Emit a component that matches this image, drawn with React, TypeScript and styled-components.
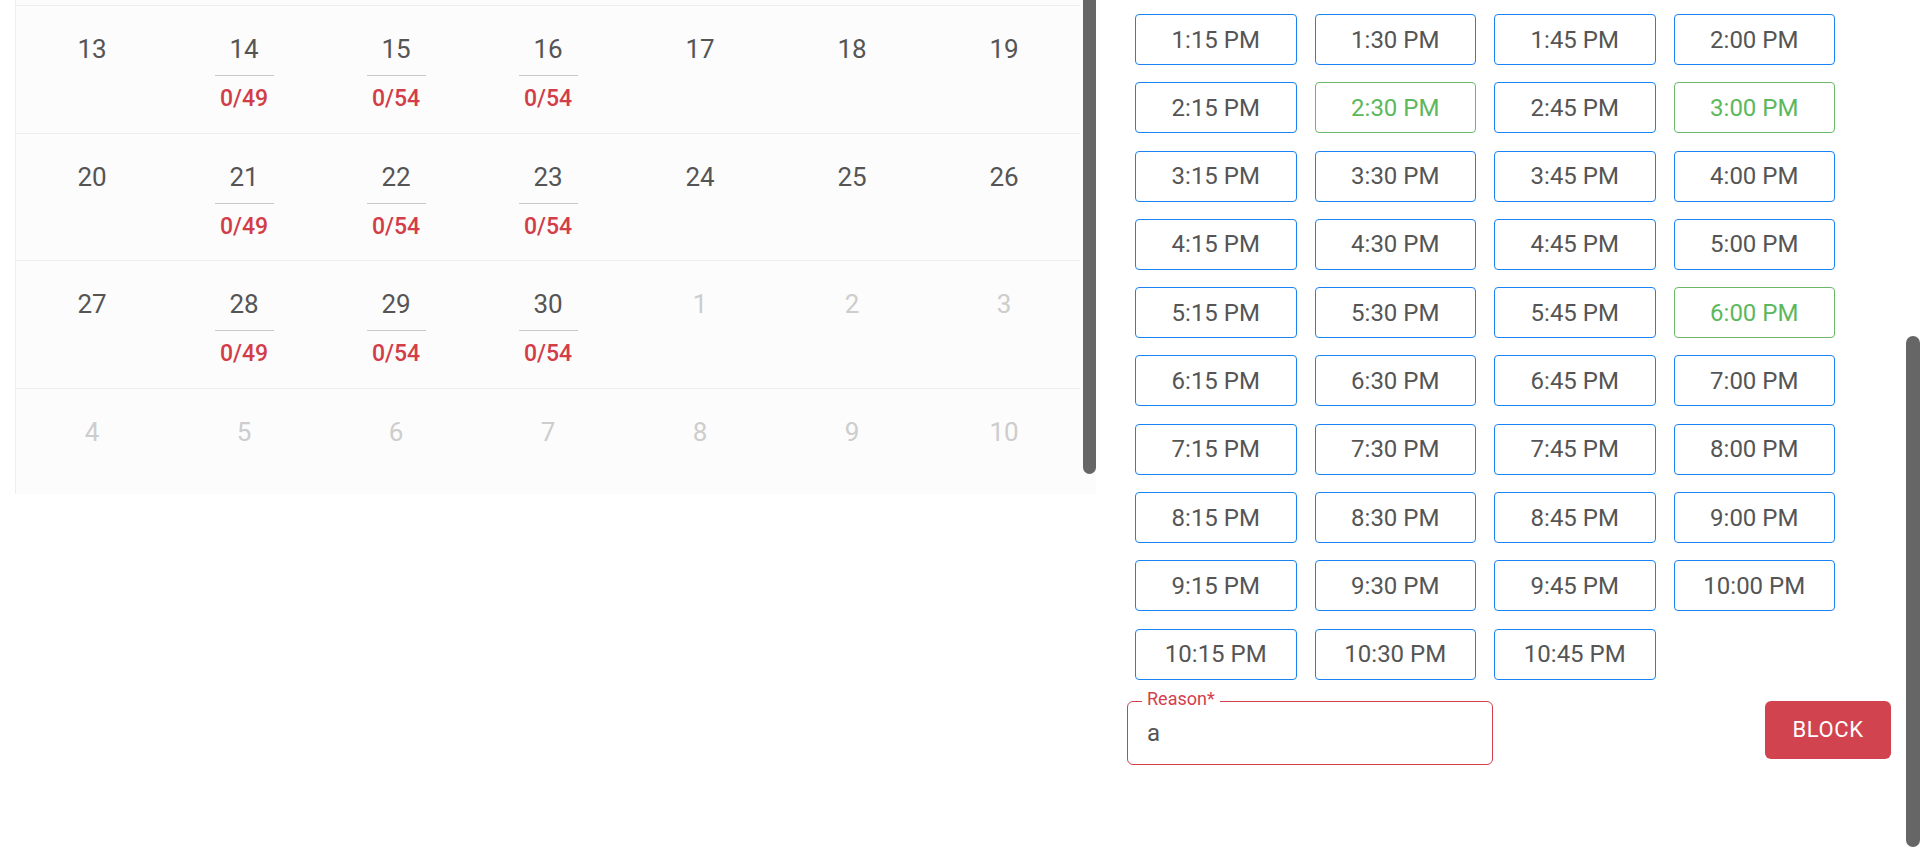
import React from 'react';
import styled, { createGlobalStyle } from 'styled-components';

const GlobalStyle = createGlobalStyle`
  html, body {
    margin: 0;
    padding: 0;
    background: #fff;
    overflow: hidden;
  }
  body {
    font-family: Roboto, "Liberation Sans", sans-serif;
  }
`;

type Day = { n: number; count?: string; muted?: boolean };

const week = (start: number, opts: { counts?: boolean; mutedFrom?: number; allMuted?: boolean } = {}): Day[] =>
  Array.from({ length: 7 }, (_, i) => {
    const raw = start + i;
    const rolled = opts.mutedFrom !== undefined && raw > opts.mutedFrom;
    const n = rolled ? raw - opts.mutedFrom! : raw;
    const muted = opts.allMuted || rolled;
    let count: string | undefined;
    if (opts.counts && !muted && i >= 1 && i <= 3) count = i === 1 ? '0/49' : '0/54';
    return { n, count, muted };
  });

// the week of the 6th is scrolled up out of view, only its bottom edge shows
const weeks: Day[][] = [
  week(13, { counts: true }),
  week(20, { counts: true }),
  week(27, { counts: true, mutedFrom: 30 }),
  week(4, { allMuted: true }),
];

const makeSlots = () => {
  const out: string[] = [];
  for (let m = 13 * 60 + 15; m <= 22 * 60 + 45; m += 15) {
    const h = Math.floor(m / 60) - 12;
    const mm = String(m % 60).padStart(2, '0');
    out.push(`${h}:${mm} PM`);
  }
  return out;
};

const slots = makeSlots();
const taken = new Set(['2:30 PM', '3:00 PM', '6:00 PM']);

const App: React.FC = () => {
  return (
    <>
      <GlobalStyle />
      <Page>
        <Calendar>
          <Weeks>
            {weeks.map((w, wi) => (
              <Week key={wi}>
                {w.map((d, di) => (
                  <Cell key={di}>
                    <DayNum muted={d.muted}>{d.n}</DayNum>
                    {d.count && <Count>{d.count}</Count>}
                  </Cell>
                ))}
              </Week>
            ))}
          </Weeks>
          <PanelThumb />
        </Calendar>

        <Side>
          <Slots>
            {slots.map((s) => (
              <SlotButton key={s} taken={taken.has(s)}>
                {s}
              </SlotButton>
            ))}
          </Slots>
          <FormRow>
            <Field>
              <FieldLabel>Reason*</FieldLabel>
              <FieldInput defaultValue="a" autoFocus />
            </Field>
            <BlockButton>Block</BlockButton>
          </FormRow>
        </Side>
      </Page>
      <PageThumb />
    </>
  );
};

export default App;

const Page = styled.div`
  display: flex;
  align-items: flex-start;
  width: 1920px;
  height: 849px;
`;

const Calendar = styled.div`
  position: relative;
  margin-left: 15px;
  width: 1081px;
  height: 494px;
  overflow: hidden;
  box-sizing: border-box;
  border-left: 1px solid #eeeeee;
  background: #fcfcfc;
  flex-shrink: 0;
`;

const Weeks = styled.div`
  padding-top: 5px;
  width: 1064px;
`;

const Week = styled.div`
  display: grid;
  grid-template-columns: repeat(7, 152px);
  height: 127.6px;
  box-sizing: border-box;
  border-top: 1px solid #eeeeee;
`;

const Cell = styled.div`
  display: flex;
  flex-direction: column;
  align-items: center;
  padding-top: 28px;
`;

const DayNum = styled.div<{ muted?: boolean }>`
  font-size: 26px;
  line-height: 30px;
  color: ${(p) => (p.muted ? '#cdcdcd' : '#555555')};
`;

const Count = styled.div`
  margin-top: 11px;
  padding-top: 9px;
  width: 59px;
  border-top: 1px solid #c8c8c8;
  text-align: center;
  font-size: 23px;
  line-height: 27px;
  font-weight: 500;
  color: #d33c49;
`;

const PanelThumb = styled.div`
  position: absolute;
  right: 0;
  top: -120px;
  bottom: 20px;
  width: 13px;
  border-radius: 7px;
  background: #666666;
`;

const Side = styled.div`
  margin-left: 31px;
  width: 764px;
  padding-top: 14px;
  flex-shrink: 0;
`;

const Slots = styled.div`
  display: grid;
  grid-template-columns: repeat(4, 161.5px);
  grid-auto-rows: 51px;
  column-gap: 18px;
  row-gap: 17.3px;
  padding: 0 8px;
`;

const SlotButton = styled.button<{ taken?: boolean }>`
  box-sizing: border-box;
  height: 51px;
  border: 1px solid ${(p) => (p.taken ? '#6cb86a' : '#1a82f2')};
  border-radius: 4px;
  background: #fff;
  color: ${(p) => (p.taken ? '#5cb85c' : '#555555')};
  font-family: Roboto, "Liberation Sans", sans-serif;
  font-size: 24px;
  padding: 0;
  cursor: pointer;
`;

const FormRow = styled.div`
  display: flex;
  justify-content: space-between;
  align-items: flex-start;
  margin-top: 21px;
`;

const Field = styled.div`
  position: relative;
  width: 366px;
  height: 64px;
  box-sizing: border-box;
  border: 1px solid #d3404c;
  border-radius: 6px;
`;

const FieldLabel = styled.span`
  position: absolute;
  top: -13px;
  left: 14px;
  padding: 0 5px;
  background: #fff;
  font-size: 18px;
  line-height: 20px;
  color: #d3404c;
`;

const FieldInput = styled.input`
  box-sizing: border-box;
  width: 100%;
  height: 100%;
  padding: 0 19px;
  border: none;
  outline: none;
  background: transparent;
  font-family: Roboto, "Liberation Sans", sans-serif;
  font-size: 24px;
  color: #555555;
  caret-color: #333;
`;

const BlockButton = styled.button`
  width: 126px;
  height: 58px;
  border: none;
  border-radius: 6px;
  background: #d1444f;
  color: #fff;
  font-family: Roboto, "Liberation Sans", sans-serif;
  font-size: 22px;
  letter-spacing: 0.6px;
  text-transform: uppercase;
  cursor: pointer;
`;

const PageThumb = styled.div`
  position: fixed;
  right: 0;
  top: 336px;
  bottom: 2px;
  width: 14px;
  border-radius: 7px;
  background: #666666;
`;
